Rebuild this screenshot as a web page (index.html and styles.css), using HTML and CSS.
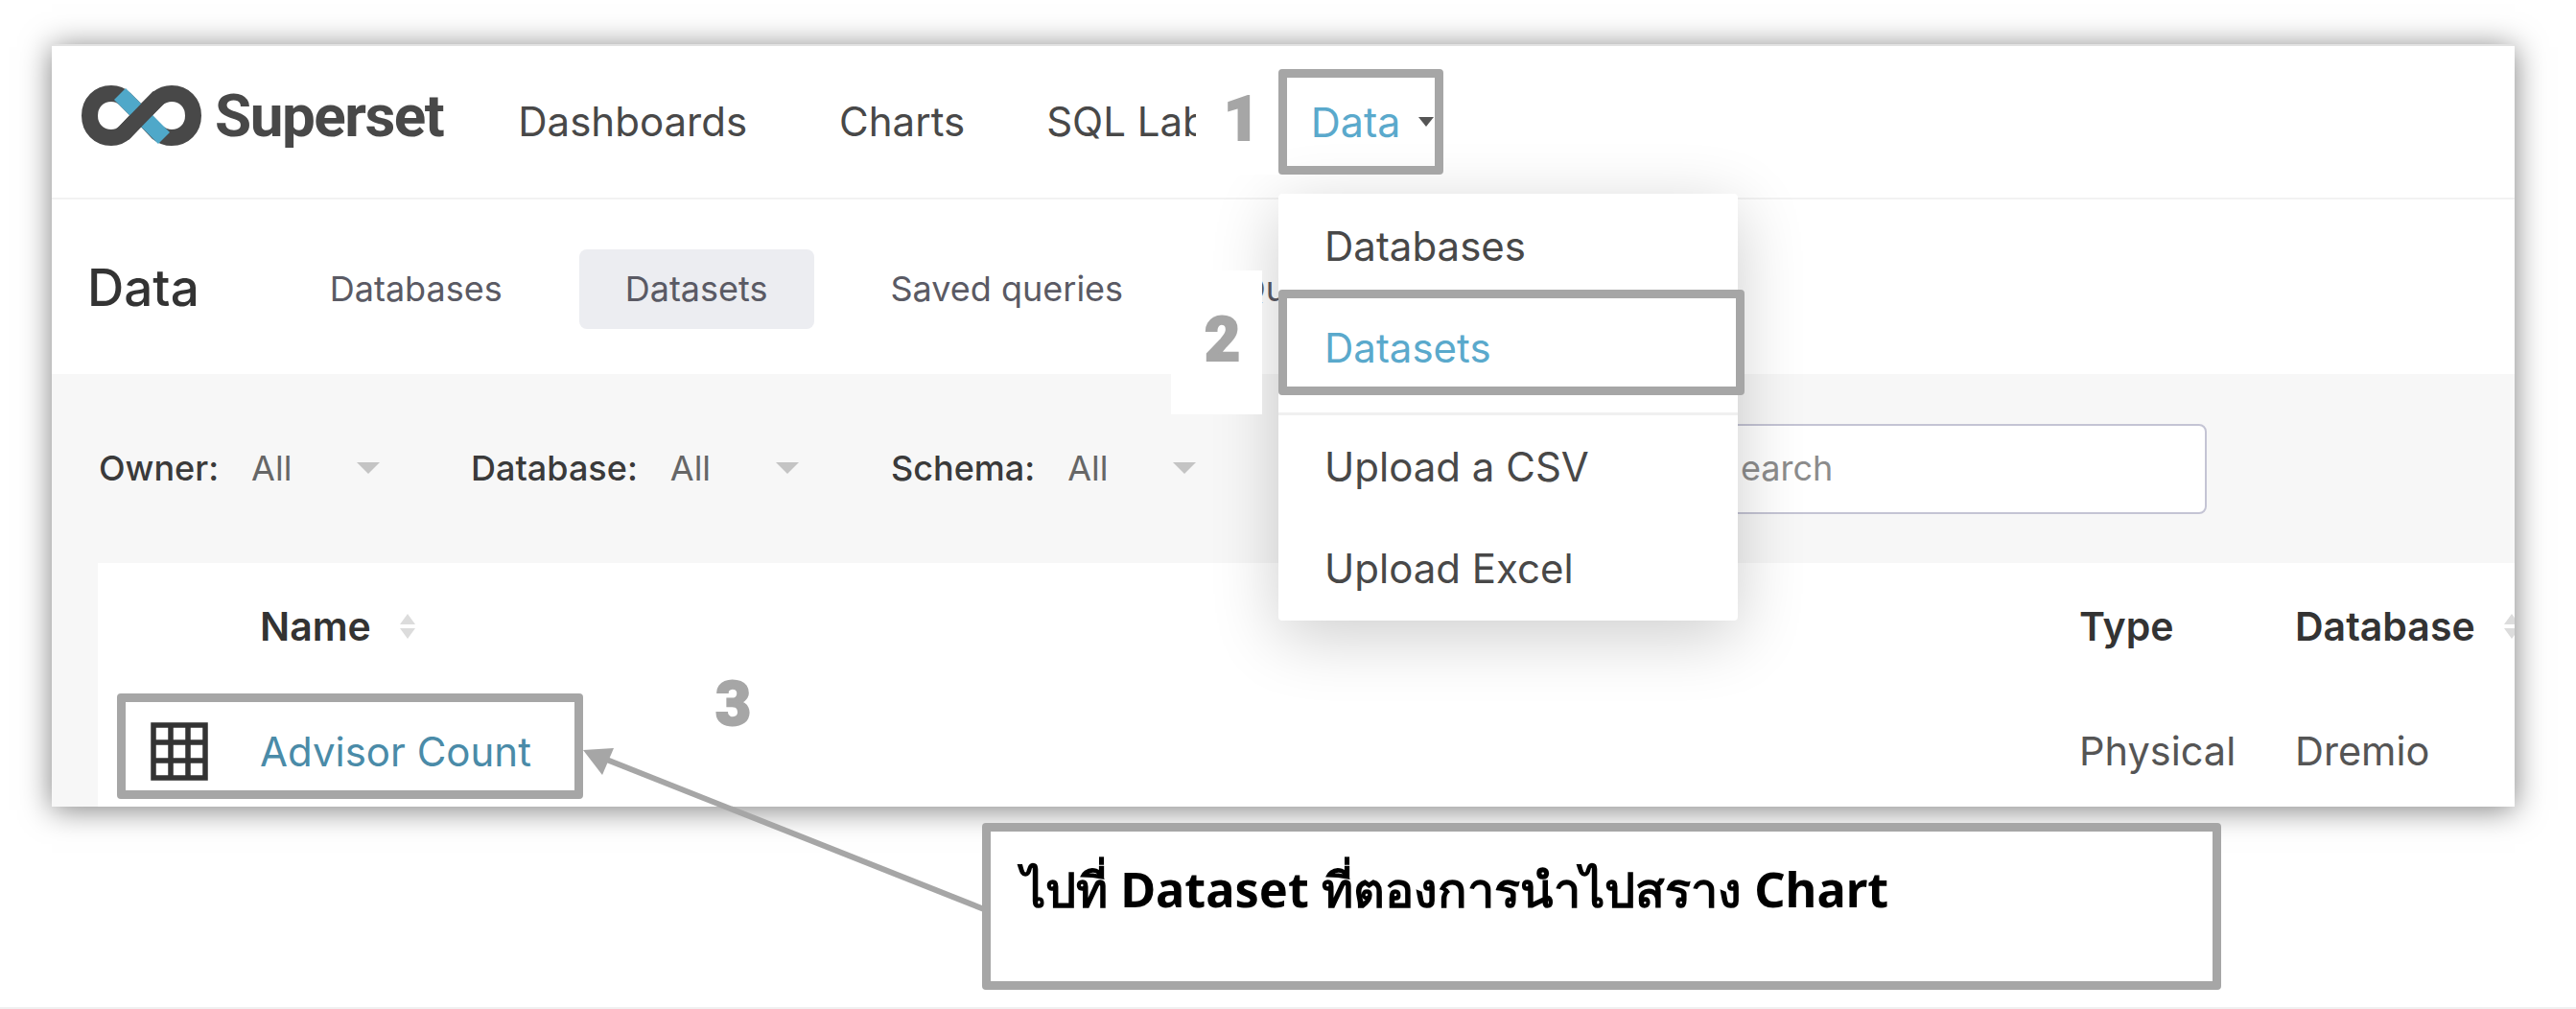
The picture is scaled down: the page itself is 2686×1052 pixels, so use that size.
FILE: index.html
```html
<!DOCTYPE html>
<html lang="th">
<head>
	<meta charset="UTF-8">
	<title>Superset</title>
	<link rel="stylesheet" href="styles.css">
</head>
<body>
	<div class="page">
		<div class="card">
			<nav class="topnav">
				<div class="brand">
					<svg class="logo" viewBox="0 0 125 63" width="125" height="63">
						<path d="M62 31 L79 14 C84 10 88 8.5 94 8.5 C107 8.5 116.5 18 116.5 31.5 C116.5 45 107 54.5 94 54.5 C88 54.5 84 53 79 49 L62 31 L45 14 C41 10 37 8.5 31 8.5 C18 8.5 8.5 18 8.5 31.5 C8.5 45 18 54.5 31 54.5 C37 54.5 41 53 45 49 Z" fill="none" stroke="#484848" stroke-width="17"/>
						<path d="M40 9 L86 55" fill="none" stroke="#4fa8c9" stroke-width="17"/>
						<path d="M43 51 L81 12" fill="none" stroke="#484848" stroke-width="17"/>
					</svg>
					<span class="brand-name">Superset</span>
				</div>
				<a class="nav-link nav-dashboards">Dashboards</a>
				<a class="nav-link nav-charts">Charts</a>
				<a class="nav-link nav-sql">SQL Lab</a>
				<a class="nav-link nav-data">Data<span class="nav-caret"></span></a>
			</nav>
			<div class="subnav">
				<h1 class="subnav-title">Data</h1>
				<a class="tab tab-first">Databases</a>
				<a class="tab tab-active">Datasets</a>
				<a class="tab tab-saved">Saved queries</a>
				<a class="tab tab-last">Qu</a>
			</div>
			<div class="main">
				<div class="filters">
					<div class="filter filter-owner"><b>Owner:</b><span class="filter-value">All</span><i class="filter-caret"></i></div>
					<div class="filter"><b>Database:</b><span class="filter-value">All</span><i class="filter-caret"></i></div>
					<div class="filter"><b>Schema:</b><span class="filter-value">All</span><i class="filter-caret"></i></div>
					<div class="search"><span class="search-text">earch</span></div>
				</div>
				<div class="table">
					<div></div>
					<div class="th">Name<span class="sort"><i class="sort-up"></i><i class="sort-down"></i></span></div>
					<div class="th">Type</div>
					<div class="th">Database<span class="sort"><i class="sort-up"></i><i class="sort-down"></i></span></div>
					<div class="td">
						<svg class="grid-icon" viewBox="0 0 60 61" width="60" height="61">
							<path d="M3 3H57V58H3Z M21 3V58 M39 3V58 M3 21H57 M3 40H57" fill="none" stroke="#333" stroke-width="5.5"/>
						</svg>
					</div>
					<div class="td td-link">Advisor Count</div>
					<div class="td">Physical</div>
					<div class="td">Dremio</div>
				</div>
			</div>
			<div class="dropdown">
				<a class="drop-item">Databases</a>
				<a class="drop-item drop-active">Datasets</a>
				<div class="drop-divider"></div>
				<a class="drop-item">Upload a CSV</a>
				<a class="drop-item">Upload Excel</a>
			</div>
		</div>

		<!-- annotations drawn on top of the screenshot -->
		<div class="patch patch-one"></div>
		<div class="patch patch-two"></div>
		<div class="mark mark-data"></div>
		<div class="mark mark-datasets"></div>
		<div class="mark mark-row"></div>
		<span class="num num-one">1</span>
		<span class="num num-two">2</span>
		<span class="num num-three">3</span>
		<svg class="arrow" viewBox="0 0 2686 1052" width="2686" height="1052">
			<path d="M1026 948 L625 789" fill="none" stroke="#a6a6a6" stroke-width="6"/>
			<path d="M608 782 L640 780 L628 808 Z" fill="#a6a6a6"/>
		</svg>
		<div class="callout">ไปที่ Dataset ที่ตองการนำไปสราง Chart</div>
	</div>
</body>
</html>
```

FILE: styles.css
```css
body {
	margin: 0;
	background-color: #fff;
	font-family: Inter, "Liberation Sans", sans-serif;
	color: #484848;
}
.page {
	position: relative;
	width: 2686px;
	height: 1050px;
	overflow: hidden;
	border-bottom: 2px solid #f0f0f0;
}
.card {
	position: absolute;
	left: 54px;
	top: 46px;
	width: 2568px;
	height: 795px;
	background-color: #fff;
	box-shadow: 0 3px 30px rgba(0, 0, 0, 0.5);
}
.card::before {
	content: "";
	position: absolute;
	left: 0;
	right: 0;
	top: 0;
	height: 2px;
	background-color: #e2e2e2;
}

/* top nav */
.topnav {
	display: flex;
	align-items: center;
	height: 162px;
	box-sizing: border-box;
	padding-left: 31px;
	padding-top: 1px;
	border-bottom: 2px solid #f2f2f2;
	font-size: 42px;
}
.brand {
	display: flex;
	align-items: center;
	gap: 14px;
	margin-top: -12px;
}
.brand-name {
	font-family: Roboto, sans-serif;
	font-weight: 700;
	font-size: 62px;
	letter-spacing: -1.5px;
	color: #484848;
}
.nav-link {
	display: flex;
	align-items: center;
	white-space: nowrap;
}
.nav-dashboards { margin-left: 78px; }
.nav-charts { margin-left: 96px; }
.nav-sql { margin-left: 85px; }
.nav-data {
	margin-left: 108px;
	font-size: 43px;
	color: #5aa9cc;
}
.nav-caret {
	width: 0;
	height: 0;
	margin-left: 19px;
	border-left: 8px solid transparent;
	border-right: 8px solid transparent;
	border-top: 10px solid #555;
}

/* page title row */
.subnav {
	display: flex;
	align-items: center;
	height: 182px;
	box-sizing: border-box;
	padding-left: 37px;
	padding-top: 5px;
	font-size: 36px;
	color: #5a5a64;
}
.subnav-title {
	margin: -4px 0 0;
	font-size: 53px;
	font-weight: 500;
	color: #333;
}
.tab {
	padding: 0 48px;
	height: 83px;
	line-height: 83px;
	border-radius: 8px;
	white-space: nowrap;
}
.tab-first { margin-left: 88px; }
.tab-active {
	margin-left: 32px;
	background-color: #ecedf1;
}
.tab-saved { margin-left: 32px; }
.tab-last { margin-left: 25px; }

/* filters and table share the grey page background */
.main {
	background-color: #f7f7f7;
}
.filters {
	display: flex;
	align-items: center;
	height: 197px;
	padding-left: 49px;
	font-size: 36px;
}
.filter {
	display: flex;
	align-items: center;
	width: 438px;
	margin-top: -2px;
}
.filter-owner {
	width: 388px;
}
.filter b {
	font-weight: 500;
	color: #3a3a3a;
}
.filter-value {
	margin-left: 34px;
	color: #666;
}
.filter-caret {
	width: 0;
	height: 0;
	margin-left: 68px;
	border-left: 12px solid transparent;
	border-right: 12px solid transparent;
	border-top: 12px solid #c4c4c4;
}
.search {
	width: 964px;
	height: 94px;
	box-sizing: border-box;
	margin-left: -30px;
	padding-left: 476px;
	line-height: 88px;
	background-color: #fff;
	border: 2px solid #c4c4d4;
	border-radius: 8px;
	color: #8c8c8c;
}

/* table */
.table {
	display: grid;
	grid-template-columns: 169px 1897px 225px 229px;
	grid-template-rows: 132px 122px;
	margin-left: 48px;
	background-color: #fff;
	font-size: 41px;
	overflow: hidden;
}
.th {
	display: flex;
	align-items: center;
	font-weight: 600;
	color: #333;
	white-space: nowrap;
}
.td {
	display: flex;
	align-items: center;
	padding-top: 6px;
	font-size: 41.5px;
	color: #555;
	white-space: nowrap;
}
.td-link {
	font-size: 42px;
	color: #4a8ba8;
}
.grid-icon {
	margin-left: 55px;
}
.sort {
	display: flex;
	flex-direction: column;
	gap: 4px;
	margin-left: 30px;
}
.sort-up {
	border-left: 8px solid transparent;
	border-right: 8px solid transparent;
	border-bottom: 11px solid #dcdcdc;
}
.sort-down {
	border-left: 8px solid transparent;
	border-right: 8px solid transparent;
	border-top: 11px solid #dcdcdc;
}

/* open menu */
.dropdown {
	position: absolute;
	left: 1279px;
	top: 156px;
	width: 479px;
	height: 445px;
	box-sizing: border-box;
	padding-top: 1px;
	background-color: #fff;
	border-radius: 4px;
	box-shadow: 0 16px 70px rgba(0, 0, 0, 0.2);
	font-size: 42px;
}
.drop-item {
	display: flex;
	align-items: center;
	height: 106px;
	padding-left: 48px;
}
.drop-active {
	color: #5aa9cc;
}
.drop-divider {
	height: 3px;
	margin-top: 15px;
	background-color: #f0f0f0;
}

/* annotations */
.patch {
	position: absolute;
	background-color: #fff;
}
.patch-one {
	left: 1247px;
	top: 72px;
	width: 86px;
	height: 110px;
}
.patch-two {
	left: 1221px;
	top: 282px;
	width: 95px;
	height: 150px;
}
.mark {
	position: absolute;
	box-sizing: border-box;
	border: 9px solid #a6a6a6;
	border-radius: 4px;
}
.mark-data {
	left: 1333px;
	top: 72px;
	width: 172px;
	height: 110px;
}
.mark-datasets {
	left: 1333px;
	top: 302px;
	width: 486px;
	height: 110px;
}
.mark-row {
	left: 122px;
	top: 723px;
	width: 486px;
	height: 110px;
}
.num {
	position: absolute;
	font-family: Roboto, sans-serif;
	font-weight: 900;
	font-size: 64px;
	line-height: 64px;
	color: #a6a6a6;
	-webkit-text-stroke: 2px #a6a6a6;
}
.num-one { left: 1276px; top: 93px; }
.num-two { left: 1256px; top: 323px; }
.num-three { left: 746px; top: 703px; }
.arrow {
	position: absolute;
	left: 0;
	top: 0;
}
.callout {
	position: absolute;
	left: 1024px;
	top: 858px;
	width: 1292px;
	height: 174px;
	box-sizing: border-box;
	padding-left: 32px;
	padding-top: 21px;
	background-color: #fff;
	border: 9px solid #a6a6a6;
	border-radius: 4px;
	font-family: "Noto Sans", "DejaVu Sans", sans-serif;
	font-weight: 700;
	font-size: 50.5px;
	color: #000;
	white-space: nowrap;
}
```
